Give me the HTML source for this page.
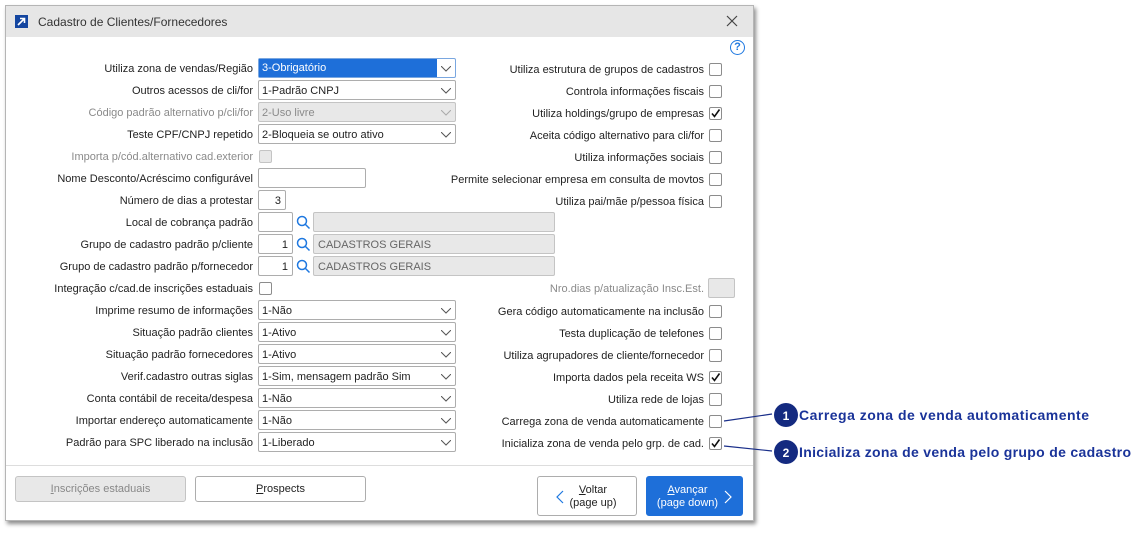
<!DOCTYPE html>
<html><head><meta charset="utf-8"><style>
*{box-sizing:border-box;margin:0;padding:0}
body{width:1147px;height:537px;background:#fff;position:relative;overflow:hidden;font-family:"Liberation Sans",sans-serif;font-size:11px;color:#222}
.dlg{position:absolute;left:5px;top:5px;width:749px;height:516px;background:#fff;border:1px solid #b5b5b5;box-shadow:2px 3px 4px rgba(0,0,0,.45)}
.tb{position:absolute;left:0;top:0;width:100%;height:31px;background:#e6e6e6}
.a{position:absolute}
.l{position:absolute;text-align:right;white-space:nowrap;line-height:14px}
.dis{color:#8a8a8a}
.cb{position:absolute;width:13px;height:13px;border:1px solid #8c8c8c;border-radius:2px;background:#fff}
.cmb{position:absolute;width:198px;height:20px;border:1px solid #adadad;border-radius:2px;background:#fff;padding-left:3px;line-height:20px}
.cmb svg{position:absolute;right:4px;top:7px}
.in{position:absolute;height:20px;border:1px solid #adadad;border-radius:2px;background:#fff;line-height:20px;padding:0 4px}
.g{background:#e8e8e8;border-color:#c4c4c4}
.btn{position:absolute;border:1px solid #adadad;border-radius:3px;background:#fff;text-align:center}
</style></head><body>
<div class="dlg">
 <div class="tb"></div>
 <div class="a" style="left:9px;top:9px;width:13px;height:13px;background:#1446a0"><svg width="13" height="13"><path d="M3 10L9.5 3.5M5 3.5h4.5V8" stroke="#fff" stroke-width="1.6" fill="none"/></svg></div>
 <div class="a" style="left:32px;top:9px;font-size:12px;color:#333">Cadastro de Clientes/Fornecedores</div>
 <svg class="a" style="left:720px;top:9px" width="12" height="12"><path d="M1 1L11 11M11 1L1 11" stroke="#444" stroke-width="1.2"/></svg>
 <div class="a" style="left:724px;top:34px;width:15px;height:15px;border:1.5px solid #1e78e0;border-radius:50%;color:#1e78e0;font-size:11px;font-weight:bold;text-align:center;line-height:12px">?</div>
 <div class="a" style="left:0;top:459px;width:100%;height:1px;background:#ddd"></div>
</div>

<div class="l" style="right:894px;top:62px">Utiliza zona de vendas/Região</div>
<div class="l" style="right:894px;top:84px">Outros acessos de cli/for</div>
<div class="l dis" style="right:894px;top:106px">Código padrão alternativo p/cli/for</div>
<div class="l" style="right:894px;top:128px">Teste CPF/CNPJ repetido</div>
<div class="l dis" style="right:894px;top:150px">Importa p/cód.alternativo cad.exterior</div>
<div class="l" style="right:894px;top:172px">Nome Desconto/Acréscimo configurável</div>
<div class="l" style="right:894px;top:194px">Número de dias a protestar</div>
<div class="l" style="right:894px;top:216px">Local de cobrança padrão</div>
<div class="l" style="right:894px;top:238px">Grupo de cadastro padrão p/cliente</div>
<div class="l" style="right:894px;top:260px">Grupo de cadastro padrão p/fornecedor</div>
<div class="l" style="right:894px;top:282px">Integração c/cad.de inscrições estaduais</div>
<div class="l" style="right:894px;top:304px">Imprime resumo de informações</div>
<div class="l" style="right:894px;top:326px">Situação padrão clientes</div>
<div class="l" style="right:894px;top:348px">Situação padrão fornecedores</div>
<div class="l" style="right:894px;top:370px">Verif.cadastro outras siglas</div>
<div class="l" style="right:894px;top:392px">Conta contábil de receita/despesa</div>
<div class="l" style="right:894px;top:414px">Importar endereço automaticamente</div>
<div class="l" style="right:894px;top:436px">Padrão para SPC liberado na inclusão</div>

<div class="cmb" style="left:258px;top:58px;padding:0;border-color:#7aa7e0"><div style="position:absolute;left:0;top:0;width:178px;height:18px;line-height:18px;background:#1e6fd9;color:#fff;padding-left:3px">3-Obrigatório</div><svg width="10" height="6"><path d="M0 0L5 5L10 0" stroke="#555" fill="none"/></svg></div>
<div class="cmb" style="left:258px;top:80px">1-Padrão CNPJ<svg width="10" height="6"><path d="M0 0L5 5L10 0" stroke="#555" fill="none"/></svg></div>
<div class="cmb g dis" style="left:258px;top:102px">2-Uso livre<svg width="10" height="6"><path d="M0 0L5 5L10 0" stroke="#aaa" fill="none"/></svg></div>
<div class="cmb" style="left:258px;top:124px">2-Bloqueia se outro ativo<svg width="10" height="6"><path d="M0 0L5 5L10 0" stroke="#555" fill="none"/></svg></div>
<div class="cb" style="left:259px;top:150px;background:#e8e8e8;border-color:#c4c4c4"></div>
<div class="in" style="left:258px;top:168px;width:108px"></div>
<div class="in" style="left:258px;top:190px;width:28px;text-align:right">3</div>
<div class="in" style="left:258px;top:212px;width:35px"></div>
<div class="in" style="left:258px;top:234px;width:35px;text-align:right">1</div>
<div class="in" style="left:258px;top:256px;width:35px;text-align:right">1</div>
<svg class="a" style="left:296px;top:215px" width="15" height="15"><circle cx="6" cy="6" r="4.5" stroke="#1e78e0" stroke-width="1.5" fill="none"/><path d="M9.5 9.5L13.5 13.5" stroke="#1e78e0" stroke-width="1.5"/></svg>
<svg class="a" style="left:296px;top:237px" width="15" height="15"><circle cx="6" cy="6" r="4.5" stroke="#1e78e0" stroke-width="1.5" fill="none"/><path d="M9.5 9.5L13.5 13.5" stroke="#1e78e0" stroke-width="1.5"/></svg>
<svg class="a" style="left:296px;top:259px" width="15" height="15"><circle cx="6" cy="6" r="4.5" stroke="#1e78e0" stroke-width="1.5" fill="none"/><path d="M9.5 9.5L13.5 13.5" stroke="#1e78e0" stroke-width="1.5"/></svg>
<div class="in g" style="left:313px;top:212px;width:242px"></div>
<div class="in g" style="left:313px;top:234px;width:242px;color:#666">CADASTROS GERAIS</div>
<div class="in g" style="left:313px;top:256px;width:242px;color:#666">CADASTROS GERAIS</div>
<div class="cb" style="left:259px;top:282px"></div>
<div class="cmb" style="left:258px;top:300px">1-Não<svg width="10" height="6"><path d="M0 0L5 5L10 0" stroke="#555" fill="none"/></svg></div>
<div class="cmb" style="left:258px;top:322px">1-Ativo<svg width="10" height="6"><path d="M0 0L5 5L10 0" stroke="#555" fill="none"/></svg></div>
<div class="cmb" style="left:258px;top:344px">1-Ativo<svg width="10" height="6"><path d="M0 0L5 5L10 0" stroke="#555" fill="none"/></svg></div>
<div class="cmb" style="left:258px;top:366px">1-Sim, mensagem padrão Sim<svg width="10" height="6"><path d="M0 0L5 5L10 0" stroke="#555" fill="none"/></svg></div>
<div class="cmb" style="left:258px;top:388px">1-Não<svg width="10" height="6"><path d="M0 0L5 5L10 0" stroke="#555" fill="none"/></svg></div>
<div class="cmb" style="left:258px;top:410px">1-Não<svg width="10" height="6"><path d="M0 0L5 5L10 0" stroke="#555" fill="none"/></svg></div>
<div class="cmb" style="left:258px;top:432px">1-Liberado<svg width="10" height="6"><path d="M0 0L5 5L10 0" stroke="#555" fill="none"/></svg></div>

<div class="l" style="right:443px;top:63px">Utiliza estrutura de grupos de cadastros</div>
<div class="l" style="right:443px;top:85px">Controla informações fiscais</div>
<div class="l" style="right:443px;top:107px">Utiliza holdings/grupo de empresas</div>
<div class="l" style="right:443px;top:129px">Aceita código alternativo para cli/for</div>
<div class="l" style="right:443px;top:151px">Utiliza informações sociais</div>
<div class="l" style="right:443px;top:173px">Permite selecionar empresa em consulta de movtos</div>
<div class="l" style="right:443px;top:195px">Utiliza pai/mãe p/pessoa física</div>
<div class="l dis" style="right:443px;top:282px">Nro.dias p/atualização Insc.Est.</div>
<div class="l" style="right:443px;top:305px">Gera código automaticamente na inclusão</div>
<div class="l" style="right:443px;top:327px">Testa duplicação de telefones</div>
<div class="l" style="right:443px;top:349px">Utiliza agrupadores de cliente/fornecedor</div>
<div class="l" style="right:443px;top:371px">Importa dados pela receita WS</div>
<div class="l" style="right:443px;top:393px">Utiliza rede de lojas</div>
<div class="l" style="right:443px;top:415px">Carrega zona de venda automaticamente</div>
<div class="l" style="right:443px;top:437px">Inicializa zona de venda pelo grp. de cad.</div>

<div class="cb" style="left:709px;top:63px"></div>
<div class="cb" style="left:709px;top:85px"></div>
<div class="cb" style="left:709px;top:107px"><svg width="11" height="11" style="position:absolute;left:0;top:0"><path d="M2 5.5L4.5 8.5L9.5 1.5" stroke="#111" stroke-width="1.6" fill="none"/></svg></div>
<div class="cb" style="left:709px;top:129px"></div>
<div class="cb" style="left:709px;top:151px"></div>
<div class="cb" style="left:709px;top:173px"></div>
<div class="cb" style="left:709px;top:195px"></div>
<div class="in g" style="left:708px;top:278px;width:27px"></div>
<div class="cb" style="left:709px;top:305px"></div>
<div class="cb" style="left:709px;top:327px"></div>
<div class="cb" style="left:709px;top:349px"></div>
<div class="cb" style="left:709px;top:371px"><svg width="11" height="11" style="position:absolute;left:0;top:0"><path d="M2 5.5L4.5 8.5L9.5 1.5" stroke="#111" stroke-width="1.6" fill="none"/></svg></div>
<div class="cb" style="left:709px;top:393px"></div>
<div class="cb" style="left:709px;top:415px"></div>
<div class="cb" style="left:709px;top:437px"><svg width="11" height="11" style="position:absolute;left:0;top:0"><path d="M2 5.5L4.5 8.5L9.5 1.5" stroke="#111" stroke-width="1.6" fill="none"/></svg></div>

<div class="btn" style="left:15px;top:476px;width:171px;height:26px;background:#e8e8e8;border-color:#c4c4c4;color:#888;line-height:25px"><u>I</u>nscrições estaduais</div>
<div class="btn" style="left:195px;top:476px;width:171px;height:26px;line-height:25px"><u>P</u>rospects</div>
<div class="btn" style="left:537px;top:476px;width:100px;height:40px;line-height:13px;padding-top:7px;padding-left:12px"><u>V</u>oltar<br>(page up)<svg style="position:absolute;left:18px;top:13px" width="8" height="14"><path d="M7 1L1 7L7 13" stroke="#1e78e0" stroke-width="1.2" fill="none"/></svg></div>
<div class="btn" style="left:646px;top:476px;width:97px;height:40px;background:#1e6fd9;border-color:#1e6fd9;color:#fff;line-height:13px;padding-top:7px;padding-right:14px"><u>A</u>vançar<br>(page down)<svg style="position:absolute;right:10px;top:13px" width="8" height="14"><path d="M1 1L7 7L1 13" stroke="#fff" stroke-width="1.2" fill="none"/></svg></div>

<svg class="a" style="left:0;top:0" width="1147" height="537"><path d="M724 421L772 414M724 446L772 451" stroke="#1a2f8a" stroke-width="1.2"/>
<circle cx="786" cy="415" r="12" fill="#142a80"/><circle cx="786" cy="452" r="12" fill="#142a80"/>
<text x="786" y="420" fill="#fff" font-family="Liberation Sans" font-weight="bold" font-size="12" text-anchor="middle">1</text>
<text x="786" y="457" fill="#fff" font-family="Liberation Sans" font-weight="bold" font-size="12" text-anchor="middle">2</text>
<text x="799" y="420" fill="#1a3399" font-family="Liberation Sans" font-weight="bold" font-size="14" textLength="290">Carrega zona de venda automaticamente</text>
<text x="799" y="457" fill="#1a3399" font-family="Liberation Sans" font-weight="bold" font-size="14" textLength="332">Inicializa zona de venda pelo grupo de cadastro</text>
</svg>
</body></html>
